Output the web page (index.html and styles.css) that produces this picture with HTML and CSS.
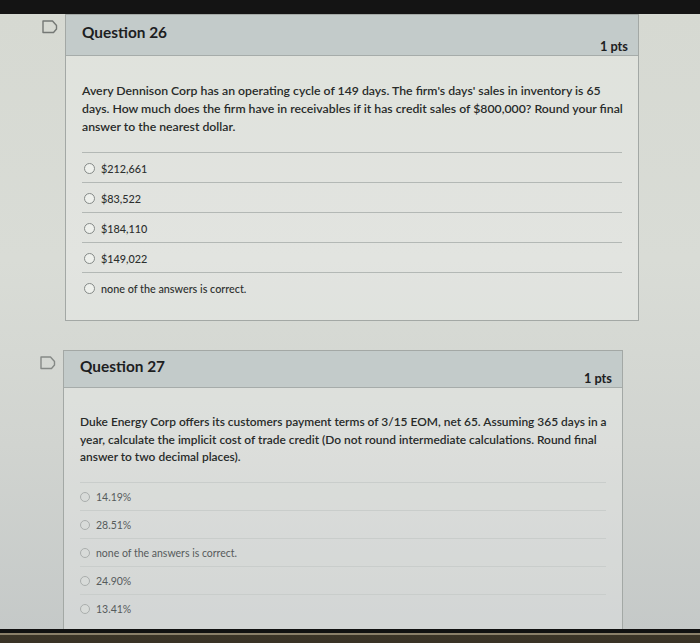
FILE: index.html
```html
<!DOCTYPE html>
<html lang="en">
<head>
<meta charset="utf-8">
<title>Quiz</title>
<link rel="stylesheet" href="styles.css">
</head>
<body>
<div class="screen">
  <section class="question question--near">
    <div class="flag">
      <svg width="16" height="14" viewBox="0 0 16 14"><path d="M1 1 H10.5 L14.5 5.5 V9 L11.5 12.5 H1 Z" fill="none" stroke="#747875" stroke-width="1.4" stroke-linejoin="round"/></svg>
    </div>
    <div class="card card--wide">
      <header class="card-header">
        <span class="title">Question 26</span>
        <span class="pts">1 pts</span>
      </header>
      <div class="card-body">
        <p class="qtext">Avery Dennison Corp has an operating cycle of 149 days. The firm's days' sales in inventory is 65<br>days. How much does the firm have in receivables if it has credit sales of $800,000? Round your final<br>answer to the nearest dollar.</p>
        <ul class="answers">
          <li class="answer"><span class="radio"></span>$212,661</li>
          <li class="answer"><span class="radio"></span>$83,522</li>
          <li class="answer"><span class="radio"></span>$184,110</li>
          <li class="answer"><span class="radio"></span>$149,022</li>
          <li class="answer"><span class="radio"></span>none of the answers is correct.</li>
        </ul>
      </div>
    </div>
  </section>

  <section class="question question--far">
    <div class="flag">
      <svg width="16" height="14" viewBox="0 0 16 14"><path d="M1 1 H10.5 L14.5 5.5 V9 L11.5 12.5 H1 Z" fill="none" stroke="#858986" stroke-width="1.4" stroke-linejoin="round"/></svg>
    </div>
    <div class="card card--narrow">
      <header class="card-header">
        <span class="title">Question 27</span>
        <span class="pts">1 pts</span>
      </header>
      <div class="card-body">
        <p class="qtext">Duke Energy Corp offers its customers payment terms of 3/15 EOM, net 65. Assuming 365 days in a<br>year, calculate the implicit cost of trade credit (Do not round intermediate calculations. Round final<br>answer to two decimal places).</p>
        <ul class="answers">
          <li class="answer"><span class="radio"></span>14.19%</li>
          <li class="answer"><span class="radio"></span>28.51%</li>
          <li class="answer"><span class="radio"></span>none of the answers is correct.</li>
          <li class="answer"><span class="radio"></span>24.90%</li>
          <li class="answer"><span class="radio"></span>13.41%</li>
        </ul>
      </div>
    </div>
  </section>
</div>
<div class="bezel"></div>
</body>
</html>
```

FILE: styles.css
```css
html, body {
  margin: 0;
  padding: 0;
}

body {
  background: #141414;
  font-family: Lato, "Noto Sans", "Liberation Sans", sans-serif;
  color: #2a2d2c;
  width: 700px;
  height: 643px;
  overflow: hidden;
}

.screen {
  height: 615px;
  margin-top: 14px;
  overflow: hidden;
  background: linear-gradient(180deg, #d6d9d2 0%, #d9dcd6 40%, #d1d4d0 70%, #c5c9c8 100%);
}

.question {
  display: flex;
  align-items: flex-start;
  gap: 7px;
}

.question--near {
  padding-left: 42px;
  --header-h: 41px;
  --title-top: 8px;
  --pts-top: 23px;
  --pad-top: 26px;
  --qsize: 12.25px;
  --qline: 18px;
  --asize: 10.8px;
  --aweight: 500;
  --acolor: #2c2f2e;
  --row: 30px;
  --line: #b3b8b5;
  --radio: #858a88;
  --radio-bg: #eef0ec;
  --radio-size: 11px;
  --radio-gap: 6px;
  --radio-left: 2px;
}

.question--far {
  padding-left: 40px;
  margin-top: 29px;
  --header-h: 37px;
  --title-top: 6px;
  --pts-top: 19px;
  --pad-top: 25px;
  --qsize: 11.95px;
  --qline: 17.5px;
  --asize: 10.5px;
  --aweight: 400;
  --acolor: #565b5c;
  --row: 28px;
  --line: #c9cdcb;
  --radio: #aaaead;
  --radio-bg: #d8dbd9;
  --radio-size: 10px;
  --radio-gap: 6px;
  --radio-left: 0px;
}

.flag {
  width: 16px;
  height: 14px;
  margin-top: 6px;
  flex: none;
}

.flag svg {
  display: block;
}

.card {
  border: 1px solid #a3a8a5;
  background: rgba(255, 255, 255, 0.24);
  box-sizing: border-box;
}

.card--wide {
  width: 574px;
}

.card--narrow {
  width: 560px;
}

.card-header {
  display: flex;
  align-items: flex-start;
  justify-content: space-between;
  box-sizing: border-box;
  height: var(--header-h);
  padding: 0 10px 0 16px;
  background: #c3cbca;
  border-bottom: 1px solid #a6acaa;
}

.title {
  font-weight: 700;
  font-size: 15.4px;
  line-height: 19px;
  color: #1d201f;
  margin-top: var(--title-top);
}

.pts {
  font-weight: 700;
  font-size: 12.8px;
  line-height: 17px;
  color: #1d201f;
  margin-top: var(--pts-top);
}

.card-body {
  padding: var(--pad-top) 16px 18px 16px;
}

.qtext {
  margin: 0;
  font-size: var(--qsize);
  font-weight: 600;
  line-height: var(--qline);
  white-space: nowrap;
  color: #282b2a;
}

.answers {
  list-style: none;
  margin: 16px 0 0 0;
  padding: 0;
}

.answer {
  display: flex;
  align-items: center;
  box-sizing: border-box;
  height: var(--row);
  padding-top: 1px;
  border-top: 1px solid var(--line);
  font-size: var(--asize);
  font-weight: var(--aweight);
  color: var(--acolor);
}

.radio {
  width: var(--radio-size);
  height: var(--radio-size);
  box-sizing: border-box;
  border: 1px solid var(--radio);
  border-radius: 50%;
  background: var(--radio-bg);
  margin: 0 var(--radio-gap) 0 var(--radio-left);
  flex: none;
}

.bezel {
  height: 14px;
  background: linear-gradient(180deg, #111 0, #111 4px, #8a7f69 4px, #8a7f69 6px, #3b3427 6px, #3a3326 100%);
}
```
